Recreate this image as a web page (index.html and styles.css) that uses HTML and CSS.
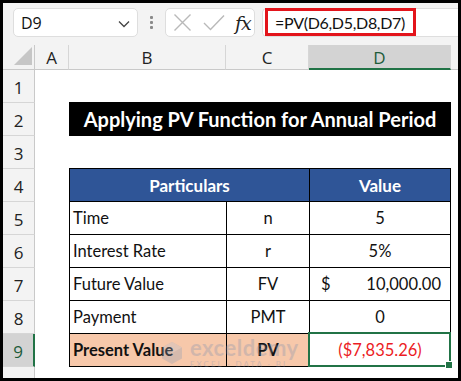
FILE: index.html
```html
<!DOCTYPE html>
<html>
<head>
<meta charset="utf-8">
<link rel="stylesheet" href="styles.css">
</head>
<body>
<div class="frame">
  <div class="app">
    <div class="toolbar">
      <div class="namebox">
        <span class="nb-text">D9</span>
        <svg class="chev" width="12" height="8" viewBox="0 0 12 8"><path d="M1 1.5 L6 6.5 L11 1.5" fill="none" stroke="#444" stroke-width="1.3"/></svg>
      </div>
      <div class="dots"><i></i><i></i><i></i></div>
      <div class="fbtns">
        <svg width="19" height="19" viewBox="0 0 19 19"><path d="M1.5 1.5 L17.5 17.5 M17.5 1.5 L1.5 17.5" stroke="#b9b9b9" stroke-width="1.4" fill="none"/></svg>
        <svg width="22" height="17" viewBox="0 0 22 17"><path d="M1 9 L7.5 15.5 L21 1.5" stroke="#b9b9b9" stroke-width="1.4" fill="none"/></svg>
        <span class="fx">fx</span>
      </div>
      <div class="fbar"><div class="formula">=PV(D6,D5,D8,D7)</div></div>
    </div>
    <div class="sheet">
      <div class="corner"><span class="tri"></span></div>
      <div class="colhead">A</div>
      <div class="colhead">B</div>
      <div class="colhead">C</div>
      <div class="colhead sel">D</div>
      <div class="colhead last"></div>

      <div class="rowhead r1">1</div>
      <div class="rowhead r2">2</div>
      <div class="rowhead r3">3</div>
      <div class="rowhead r4">4</div>
      <div class="rowhead r5">5</div>
      <div class="rowhead r6">6</div>
      <div class="rowhead r7">7</div>
      <div class="rowhead r8">8</div>
      <div class="rowhead r9 sel">9</div>
      <div class="rowhead r10"></div>

      <div class="title">Applying PV Function for Annual Period</div>

      <div class="tbl">
        <div class="th span2">Particulars</div>
        <div class="th">Value</div>

        <div class="td">Time</div>
        <div class="td c">n</div>
        <div class="td c">5</div>

        <div class="td">Interest Rate</div>
        <div class="td c">r</div>
        <div class="td c">5%</div>

        <div class="td">Future Value</div>
        <div class="td c">FV</div>
        <div class="td money"><span>$</span><span>10,000.00</span></div>

        <div class="td">Payment</div>
        <div class="td c">PMT</div>
        <div class="td c">0</div>

        <div class="td hl b">Present Value</div>
        <div class="td hl b c">PV</div>
        <div class="td c neg active">($7,835.26)</div>
      </div>

      <div class="watermark">
        <svg width="24" height="24" viewBox="0 0 24 24"><path d="M12 1 L22 6.5 L22 17.5 L12 23 L2 17.5 L2 6.5 Z" fill="#8a9bb5"/><path d="M12 1 L22 6.5 L12 12 L2 6.5 Z" fill="#b5c1d3"/></svg>
        <div class="wm-text">
          <span class="wm-big">exceldemy</span>
          <span class="wm-small">EXCEL · DATA · BI</span>
        </div>
      </div>
    </div>
  </div>
</div>
</body>
</html>
```

FILE: styles.css
```css
* { box-sizing: border-box; }
html, body { margin: 0; padding: 0; }
body { background: #000; width: 461px; height: 381px; overflow: hidden; }

.frame { padding: 3px; width: 461px; height: 381px; background: #000; }
.app { width: 455px; height: 375px; background: #fff; display: flex; flex-direction: column; overflow: hidden; }

.toolbar {
  height: 42px;
  flex: none;
  background: #f3f3f3;
  display: flex;
  align-items: flex-start;
  padding: 5px 0 0 10px;
}
.namebox {
  width: 125px; height: 29px;
  background: #fff;
  border: 1px solid #dedede;
  border-radius: 5px;
  display: flex; align-items: center; justify-content: space-between;
  padding: 0 7px 0 7px;
}
.nb-text { font-family: "Open Sans", sans-serif; font-size: 16px; color: #111; }
.chev { margin-top: 2px; }
.dots { width: 27px; height: 29px; display: flex; flex-direction: column; align-items: center; justify-content: center; gap: 2px; }
.dots i { width: 3px; height: 3px; background: #8a8a8a; display: block; border-radius: 1px; }
.fbtns {
  width: 90px; height: 29px;
  background: #fff;
  border: 1px solid #dedede;
  border-radius: 5px;
  display: flex; align-items: center;
  padding: 0 0 0 7px;
  gap: 11px;
}
.fx { font-family: "DejaVu Serif", "Liberation Serif", serif; font-style: italic; font-size: 19px; color: #222; margin-left: -1px; letter-spacing: -1px; }
.fbar {
  flex: 1;
  height: 29px;
  margin-left: 7px;
  background: #fff;
  border: 1px solid #dedede;
  border-right: none;
  border-radius: 5px 0 0 5px;
  padding: 0 0 0 2px;
}
.formula {
  width: 151px; height: 28px;
  margin-top: -1px;
  border: 3px solid #e3141b;
  font-family: "Lato", sans-serif; font-size: 16px; color: #111;
  letter-spacing: -0.3px;
  display: flex; align-items: center;
  padding-left: 7px;
  white-space: nowrap;
}

.sheet {
  position: relative;
  flex: 1;
  display: grid;
  grid-template-columns: 32px 34px 157px 83px 142px 1fr;
  grid-template-rows: 25px repeat(9, 33px) 1fr;
  background: #fff;
}
.corner, .colhead, .rowhead { background: #f3f3f3; font-family: "Open Sans", sans-serif; color: #222; }
.corner { grid-row: 1; grid-column: 1; border-right: 1px solid #c9c9c9; border-bottom: 1px solid #c9c9c9; position: relative; }
.tri { position: absolute; right: 2px; bottom: 4px; width: 0; height: 0; border-left: 18px solid transparent; border-bottom: 18px solid #c6c6c6; }
.colhead {
  grid-row: 1;
  border-right: 1px solid #d6d6d6;
  border-bottom: 1px solid #c9c9c9;
  display: flex; align-items: center; justify-content: center;
  font-size: 17px;
  padding-top: 1px;
}
.colhead.sel { background: #d3d3d3; border-bottom: 2px solid #217346; color: #1d5c3a; }
.colhead.last { border-right: none; }
.rowhead {
  grid-column: 1;
  border-right: 1px solid #c9c9c9;
  border-bottom: 1px solid #d6d6d6;
  display: flex; align-items: center; justify-content: center;
  font-size: 17px;
  padding-top: 2px;
}
.rowhead.r10 { border-bottom: none; }
.rowhead.sel { background: #d3d3d3; border-right: 2px solid #217346; color: #1d5c3a; }

.title {
  grid-row: 3; grid-column: 3 / 6;
  background: #000; color: #fff;
  font-family: "Lato", sans-serif; font-weight: 700; font-size: 20px;
  display: flex; align-items: center; justify-content: center;
  margin-top: -1px;
  white-space: nowrap;
}

.tbl {
  grid-row: 5 / 11; grid-column: 3 / 6;
  align-self: start;
  margin-top: -1px;
  display: grid;
  grid-template-columns: 156px 82px 140px;
  grid-auto-rows: 32px;
  gap: 1px;
  background: #000;
  border: 1px solid #000;
  font-family: "Lato", sans-serif; font-size: 16.5px; color: #111;
}
.th { background: #2f5597; color: #fff; font-weight: 700; font-size: 17px; display: flex; align-items: center; justify-content: center; }
.span2 { grid-column: span 2; }
.td { background: #fff; display: flex; align-items: center; padding-left: 3px; }
.td.c { justify-content: center; padding-left: 0; }
.td.hl { background: #f7c8aa; }
.td.b { font-weight: 700; }
.td.money { justify-content: space-between; padding: 0 9px 0 11px; }
.td.neg { color: #ec1c24; }
.td.active { position: relative; }
.td.active::after {
  content: ""; position: absolute; left: -2px; top: -2px; right: -1px; bottom: -1px;
  border: 2px solid #217346;
}
.td.active::before {
  content: ""; position: absolute; right: -3px; bottom: -3px; width: 6px; height: 6px;
  background: #217346; border: 1px solid #fff; z-index: 2;
}

.watermark {
  position: absolute; left: 157px; top: 292px;
  display: flex; align-items: center; gap: 6px;
  opacity: 0.3;
  pointer-events: none;
}
.wm-text { display: flex; flex-direction: column; line-height: 1; }
.wm-big { font-family: "Lato", sans-serif; font-weight: 700; font-size: 22px; color: #7d8fb0; letter-spacing: 0.5px; }
.wm-small { font-family: "Lato", sans-serif; font-size: 8px; color: #7d8fb0; letter-spacing: 2px; margin-top: 1px; }
```
